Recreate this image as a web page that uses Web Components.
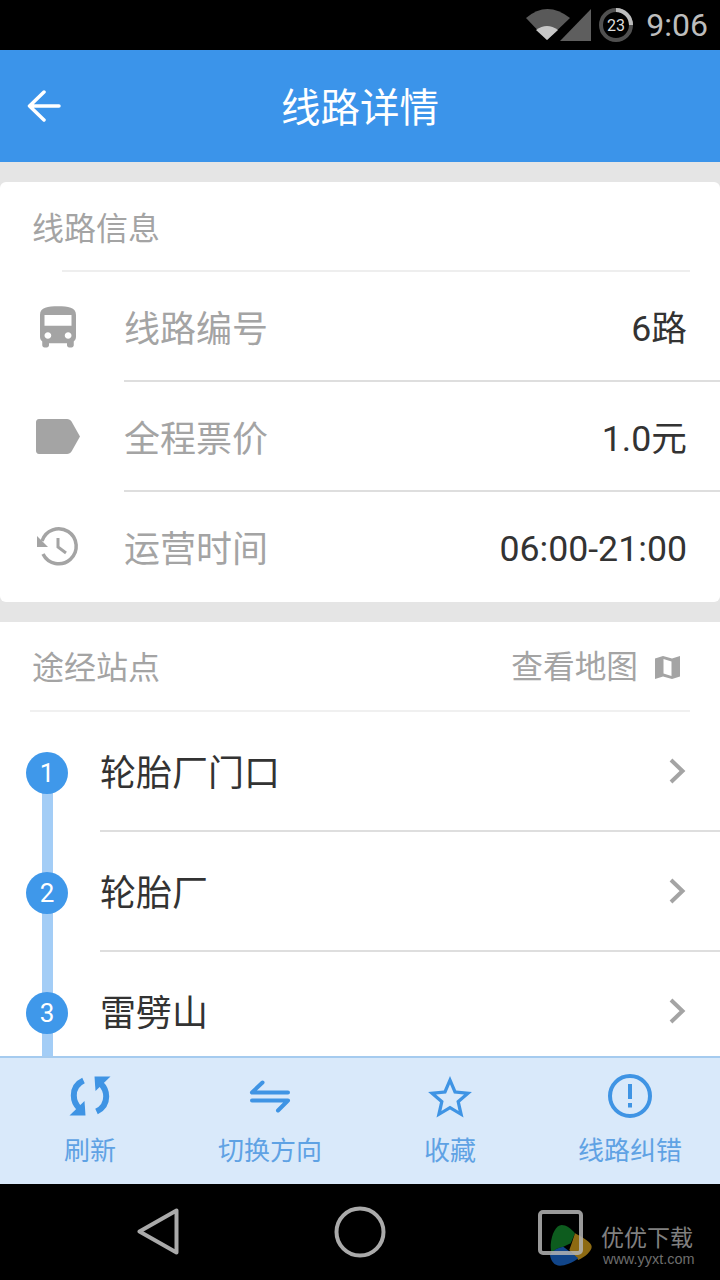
<!DOCTYPE html>
<html lang="zh"><head><meta charset="utf-8"><title>线路详情</title>
<style>
html,body{margin:0;padding:0;background:#000}
body{width:720px;height:1280px;font-family:Roboto,"Noto Sans CJK SC",sans-serif;overflow:hidden}
app-shell{height:1280px}
</style></head><body>
<app-shell>
  <status-bar></status-bar>
  <app-bar title="线路详情"></app-bar>
  <main-area>
    <info-card>
      <info-row label="线路编号" value="6路" icon="bus"></info-row>
      <info-row label="全程票价" value="1.0元" icon="tag"></info-row>
      <info-row label="运营时间" value="06:00-21:00" icon="history" last></info-row>
    </info-card>
    <stops-card>
      <stop-row n="1" name="轮胎厂门口"></stop-row>
      <stop-row n="2" name="轮胎厂"></stop-row>
      <stop-row n="3" name="雷劈山"></stop-row>
    </stops-card>
  </main-area>
  <action-bar>
    <action-item label="刷新" icon="refresh"></action-item>
    <action-item label="切换方向" icon="swap"></action-item>
    <action-item label="收藏" icon="star"></action-item>
    <action-item label="线路纠错" icon="alert"></action-item>
  </action-bar>
  <nav-bar></nav-bar>
</app-shell>
<script>
const CJK='Roboto,"Noto Sans CJK SC",sans-serif';
function def(name,html){
  customElements.define(name,class extends HTMLElement{
    connectedCallback(){
      if(this.shadowRoot)return;
      const r=this.attachShadow({mode:'open'});
      r.innerHTML=typeof html==='function'?html(this):html;
    }
  });
}
const ARC='<path d="M15.500 6.500C9 9.500 5.800 15 5.800 21.500 5.800 26.500 7.800 31 11.500 34.500" fill="none" stroke="#3f94e4" stroke-width="6"/><path d="M1.500 41.500L17.500 41.500 16.500 27Z" fill="#3f94e4"/>';
const ICONS={
 bus:`<svg style="margin-top:1px" width="54" height="52" preserveAspectRatio="none" viewBox="0 0 24 24" fill="#a4a4a4"><path d="M4 16c0 .88.39 1.67 1 2.22V20c0 .55.45 1 1 1h1c.55 0 1-.45 1-1v-1h8v1c0 .55.45 1 1 1h1c.55 0 1-.45 1-1v-1.780c.61-.55 1-1.340 1-2.220V6c0-3.500-3.580-4-8-4s-8 .5-8 4v10zm3.500 1c-.83 0-1.500-.67-1.500-1.500S6.670 14 7.500 14s1.500.67 1.500 1.500S8.330 17 7.500 17zm9 0c-.83 0-1.500-.67-1.500-1.500s.67-1.500 1.500-1.500 1.500.67 1.500 1.500-.67 1.500-1.500 1.500zm1.500-6H6V6h12v5z"/></svg>`,
 tag:`<svg width="48" height="48" viewBox="0 0 48 48" fill="#a4a4a4"><path d="M5 6H33C35 6 36.500 7 37.500 8.500L46 23.500 37.500 38.500C36.500 40 35 41 33 41H5C3 41 2 39.500 2 38V9C2 7.500 3 6 5 6Z"/></svg>`,
 history:`<svg width="48" height="48" viewBox="0 0 48 48" fill="none" stroke="#a4a4a4" stroke-width="3.500"><path d="M8 18A17.500 17.500 0 1 1 9 31"/><path d="M24 15V24L32 30" stroke-width="3"/><path d="M3 13V24H14Z" fill="#a4a4a4" stroke="none"/></svg>`,
 refresh:`<svg width="44" height="44" viewBox="0 0 44 44">${ARC}<g transform="rotate(180 22 22)">${ARC}</g></svg>`,
 swap:`<svg width="44" height="44" viewBox="0 0 44 44" fill="none" stroke="#3f94e4" stroke-width="4" stroke-linecap="round"><path d="M4 18.500H40M4 18.500L14.500 8.500M40 26.500H4M40 26.500L30 36.500"/></svg>`,
 star:`<svg width="46" height="44" viewBox="0 0 46 44" fill="#3f94e4" fill-rule="evenodd"><path d="M23 2L29.200 16.500 44.900 17.900 33 28.200 36.500 43.600 23 35.500 9.500 43.600 13 28.200 1.100 17.900 16.800 16.500ZM23 10.300L19.100 19.600 9 20.500 16.600 27.100 14.400 36.900 23 31.700 31.600 36.900 29.400 27.100 37 20.500 26.900 19.600Z"/></svg>`,
 alert:`<svg width="46" height="46" viewBox="0 0 46 46"><circle cx="23" cy="23" r="20" fill="none" stroke="#3f94e4" stroke-width="4"/><path fill="#3f94e4" d="M21 11h4v15h-4zM21 30h4v4.500h-4z"/></svg>`
};
def('app-shell',`<style>:host{display:flex;flex-direction:column;width:720px;height:1280px;background:#e5e5e5}</style><slot></slot>`);
def('status-bar',`<style>:host{display:flex;flex:none;height:50px;background:#000;align-items:center;justify-content:flex-end;box-sizing:border-box;padding-right:12px;color:#bdbdbd;font:32px Roboto,sans-serif}
svg{display:block}.clk{margin-left:13px;line-height:50px}.bat{margin-left:7px}
</style>
<svg width="66" height="36" viewBox="0 0 66 36"><path d="M0 11Q21 -7 44 11L21 33Z" fill="#595959"/><path d="M10 23Q21 15 32 23L21 33Z" fill="#c6c6c6"/><path d="M65 2V34H34Z" fill="#5e5e5e"/></svg>
<svg class="bat" width="34" height="34" viewBox="0 0 34 34"><circle cx="17" cy="17" r="15" fill="none" stroke="#505050" stroke-width="4"/><path d="M17 2A15 15 0 0 1 32 17" fill="none" stroke="#bdbdbd" stroke-width="4"/><text x="17" y="23" text-anchor="middle" font-family="Roboto,sans-serif" font-size="16" fill="#ddd">23</text></svg>
<span class="clk">9:06</span>`);
def('app-bar',h=>`<style>:host{display:flex;flex:none;height:112px;box-sizing:border-box;padding-bottom:4px;background:#3b94ea;align-items:center;justify-content:center;position:relative;color:#fff;font:400 39.500px ${CJK}}
svg{position:absolute;left:27px;top:40px}</style>
<svg width="34" height="32" viewBox="0 0 34 32" fill="none" stroke="#fff" stroke-width="3.500" stroke-linecap="round" stroke-linejoin="round"><path d="M2.500 16H32M17 2L2.500 16 17 30"/></svg>
<span>${h.getAttribute('title')}</span>`);
def('main-area',`<style>:host{display:flex;flex-direction:column;flex:1;min-height:0;overflow:hidden;padding-top:20px;gap:20px;box-sizing:border-box}</style><slot></slot>`);
def('info-card',`<style>:host{display:block;flex:none;background:#fff;border-radius:6px;height:420px}
h2{margin:0;font:400 32px/82px ${CJK};color:#a4a4a4;padding:6px 0 0 32px;height:82px}
hr{border:0;height:2px;background:#eeeeee;margin:0 30px 0 62px}</style><h2>线路信息</h2><hr><slot></slot>`);
def('info-row',h=>`<style>:host{display:flex;height:110px;box-sizing:border-box;color:#a4a4a4}
.i{width:124px;flex:none;display:flex;align-items:center;justify-content:center;box-sizing:border-box;padding-right:8px}
.b{flex:1;display:flex;align-items:center;justify-content:space-between;padding:8px 33px 0 0;border-bottom:2px solid ${h.hasAttribute('last')?'transparent':'#dedede'};height:110px;box-sizing:border-box;font:36px/46px ${CJK}}
.v{color:#333;font-size:35.700px;margin-bottom:2px}</style>
<div class="i">${ICONS[h.getAttribute('icon')]}</div>
<div class="b"><span>${h.getAttribute('label')}</span><span class="v">${h.getAttribute('value')}</span></div>`);
def('stops-card',`<style>:host{display:block;flex:1;min-height:0;background:#fff;overflow:hidden}
.h{display:flex;justify-content:space-between;align-items:center;height:84px;padding-top:4px;margin:0 30px;border-bottom:2px solid #f0f0f0;font:32px/44px ${CJK};color:#a4a4a4}
.h span{display:block}.r{display:flex;align-items:center;gap:16px}.r span{font-size:31.700px}
.h>span:first-child{margin-left:2px}svg{display:block;margin:0 10px 2px 0}</style>
<div class="h"><span>途经站点</span><div class="r"><span>查看地图</span><svg width="26" height="26" viewBox="0 0 26 26" fill="#a4a4a4" fill-rule="evenodd"><path d="M1 4.500L9 2 18 4.500 26 2V22.500L18 25 9 22.500 1 25ZM9.500 5V19.500L17.500 22V7.500Z"/></svg></div></div><slot></slot>`);
def('stop-row',h=>`<style>:host{display:flex;height:120px;position:relative;box-sizing:border-box}
.rail{position:absolute;left:42px;width:11px;top:60px;height:122px;background:#a3cdf6}
.dot{position:absolute;left:26px;top:40px;width:42px;height:42px;border-radius:50%;background:#3f98ea;color:#fff;font:26px/42px Roboto,sans-serif;text-align:center}
.b{margin-left:100px;flex:1;display:flex;align-items:center;justify-content:space-between;border-bottom:2px solid #dedede;font:36px/46px ${CJK};color:#333;box-sizing:border-box;padding:6px 34px 0 0}
svg{display:block;margin-bottom:6px}</style>
<div class="rail"></div><div class="dot">${h.getAttribute('n')}</div>
<div class="b"><span>${h.getAttribute('name')}</span><svg width="18" height="26" viewBox="0 0 18 26" fill="none" stroke="#a4a4a4" stroke-width="4"><path d="M3 2L14.500 13 3 24"/></svg></div>`);
def('action-bar',`<style>:host{display:flex;flex:none;height:128px;box-sizing:border-box;background:#d9e9fa;border-top:2px solid #a5cbef}</style><slot></slot>`);
def('action-item',h=>`<style>:host{flex:none;display:flex;flex-direction:column;align-items:center;width:180px;color:#5fa2e4;font:26px/34px ${CJK}}
.ic{height:44px;margin-top:16px;display:flex;align-items:center;justify-content:center}svg{display:block}
.t{margin-top:16px}</style><div class="ic">${ICONS[h.getAttribute('icon')]}</div><div class="t">${h.getAttribute('label')}</div>`);
def('nav-bar',`<style>:host{display:flex;flex:none;height:96px;background:#000;position:relative}
svg{position:absolute}.mark{position:absolute;left:601px;top:41px;color:#808080;font:23px/28px ${CJK}}
.u{font:14.450px/14px "Liberation Sans",sans-serif;color:#6e6e6e;margin:-1px 0 0 2px;white-space:nowrap}</style>
<svg style="left:137px;top:24px" width="44" height="48" viewBox="0 0 44 48" fill="none" stroke="#aaa" stroke-width="4" stroke-linejoin="round"><path d="M39.500 2.500V44.500L2.500 23.500Z"/></svg>
<svg style="left:334px;top:22px" width="52" height="52" viewBox="0 0 52 52" fill="none" stroke="#aaa" stroke-width="4"><circle cx="26" cy="26" r="23.500"/></svg>
<svg style="left:549px;top:40px" width="44" height="44" viewBox="0 0 44 44"><path d="M1.700 21C2.500 10 7 1 12.700 1 17 1 22 4.500 26 9.300L21.700 19.300 14.300 22.700C9 23.500 5 26 2.700 29.300 2 27 1.700 24 1.700 21Z" fill="#0d5c1e"/><path d="M26 9.300C33 13 42.700 18.500 42.700 22.700 42.700 27 36 33 29.300 36L20.300 26 22.700 19.300Z" fill="#8d6a12"/><path d="M1 31C4 26 9 23.500 14.300 22.700L21 27.700 29.300 34.300C23 39 16 41.700 11 41.700 5 41.700 2 37 1 31Z" fill="#114589"/></svg>
<svg style="left:537px;top:25px" width="46" height="46" viewBox="0 0 46 46" fill="none" stroke="#b4b4b4" stroke-opacity=".85" stroke-width="4"><rect x="3" y="3" width="41" height="41" rx="3"/></svg>
<div class="mark"><div>优优下载</div><div class="u">www.yyxt.com</div></div>`);
</script>
</body></html>
